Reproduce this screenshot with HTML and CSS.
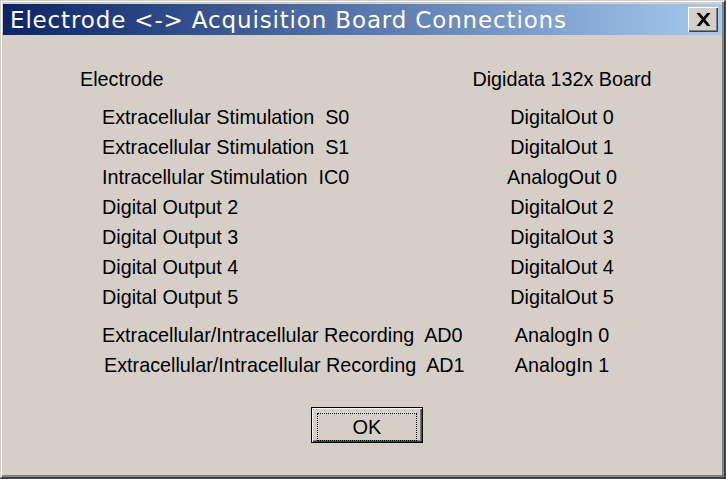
FILE: index.html
```html
<!DOCTYPE html>
<html lang="en">
<head>
  <meta charset="UTF-8">
  <title>Electrode &lt;-&gt; Acquisition Board Connections</title>
  <link rel="stylesheet" href="styles.css">
</head>
<body>
  <div class="window">
    <div class="titlebar">
      <span class="title">Electrode &lt;-&gt; Acquisition Board Connections</span>
      <button class="close" type="button">
        <svg width="15" height="13" viewBox="0 0 15 13"><path d="M0.5 0h3.5l3.5 4.3 3.5-4.3h3.5l-5.2 6.5 5.2 6.5h-3.5l-3.5-4.3-3.5 4.3h-3.5l5.2-6.5z" fill="#000"/></svg>
      </button>
    </div>
    <div class="content">
      <div class="table">
        <div class="head">Electrode</div>
        <div class="head right">Digidata 132x Board</div>

        <div class="item first">Extracellular Stimulation&nbsp; S0</div>
        <div class="right first">DigitalOut 0</div>
        <div class="item">Extracellular Stimulation&nbsp; S1</div>
        <div class="right">DigitalOut 1</div>
        <div class="item">Intracellular Stimulation&nbsp; IC0</div>
        <div class="right">AnalogOut 0</div>
        <div class="item">Digital Output 2</div>
        <div class="right">DigitalOut 2</div>
        <div class="item">Digital Output 3</div>
        <div class="right">DigitalOut 3</div>
        <div class="item">Digital Output 4</div>
        <div class="right">DigitalOut 4</div>
        <div class="item">Digital Output 5</div>
        <div class="right">DigitalOut 5</div>

        <div class="item gap">Extracellular/Intracellular Recording&nbsp; AD0</div>
        <div class="right gap">AnalogIn 0</div>
        <div class="item nudge">Extracellular/Intracellular Recording&nbsp; AD1</div>
        <div class="right">AnalogIn 1</div>
      </div>
      <div class="buttons">
        <button class="ok" type="button"><span>OK</span></button>
      </div>
    </div>
  </div>
</body>
</html>
```

FILE: styles.css
```css
html, body {
  margin: 0;
  padding: 0;
}
body {
  background-color: #d4d0c8;
  font-family: "Liberation Sans", Arial, sans-serif;
  color: #000;
}
.window {
  width: 726px;
  height: 479px;
  box-sizing: border-box;
  background-color: #d4d0c8;
  border-top: 1px solid #d4d0c8;
  border-left: 1px solid #d4d0c8;
  border-right: 2px solid #404040;
  border-bottom: 2px solid #404040;
  box-shadow: inset 1px 1px 0 #fff, inset -2px -2px 0 #808080;
  padding: 3px 2px 0 2px;
}
.titlebar {
  height: 31px;
  display: flex;
  align-items: center;
  justify-content: space-between;
  padding: 0 4px 0 7px;
  background: linear-gradient(to right, #0a246a, #a6caf0);
}
.title {
  color: #fff;
  font-family: "DejaVu Sans", Verdana, sans-serif;
  font-size: 23px;
  letter-spacing: 0.85px;
  white-space: nowrap;
}
.close {
  width: 30px;
  height: 25px;
  padding: 0;
  display: flex;
  align-items: center;
  justify-content: center;
  background-color: #d4d0c8;
  border: none;
  box-shadow: inset 1px 1px 0 #fff, inset -1px -1px 0 #404040, inset -2px -2px 0 #808080;
}
.content {
  padding-top: 29px;
}
.table {
  display: grid;
  grid-template-columns: 382px 200px;
  padding-left: 77px;
  font-size: 19.8px;
}
.table > div {
  height: 30px;
  line-height: 30px;
  white-space: nowrap;
}
.item {
  padding-left: 22px;
}
.right {
  text-align: center;
}
.first {
  margin-top: 8px;
}
.gap {
  margin-top: 8px;
}
.nudge {
  padding-left: 24px;
}
.buttons {
  display: flex;
  padding-left: 308px;
  padding-top: 27px;
}
.ok {
  width: 112px;
  height: 36px;
  padding: 3px;
  box-sizing: border-box;
  background-color: #d4d0c8;
  border: 1px solid #000;
  box-shadow: inset 1px 1px 0 #fff, inset -1px -1px 0 #404040, inset -2px -2px 0 #808080;
  font-family: "Liberation Sans", Arial, sans-serif;
  font-size: 20px;
  color: #000;
}
.ok span {
  display: flex;
  align-items: center;
  justify-content: center;
  height: 100%;
  margin: 2px;
  border: 1px dotted #000;
  box-sizing: border-box;
}
```
